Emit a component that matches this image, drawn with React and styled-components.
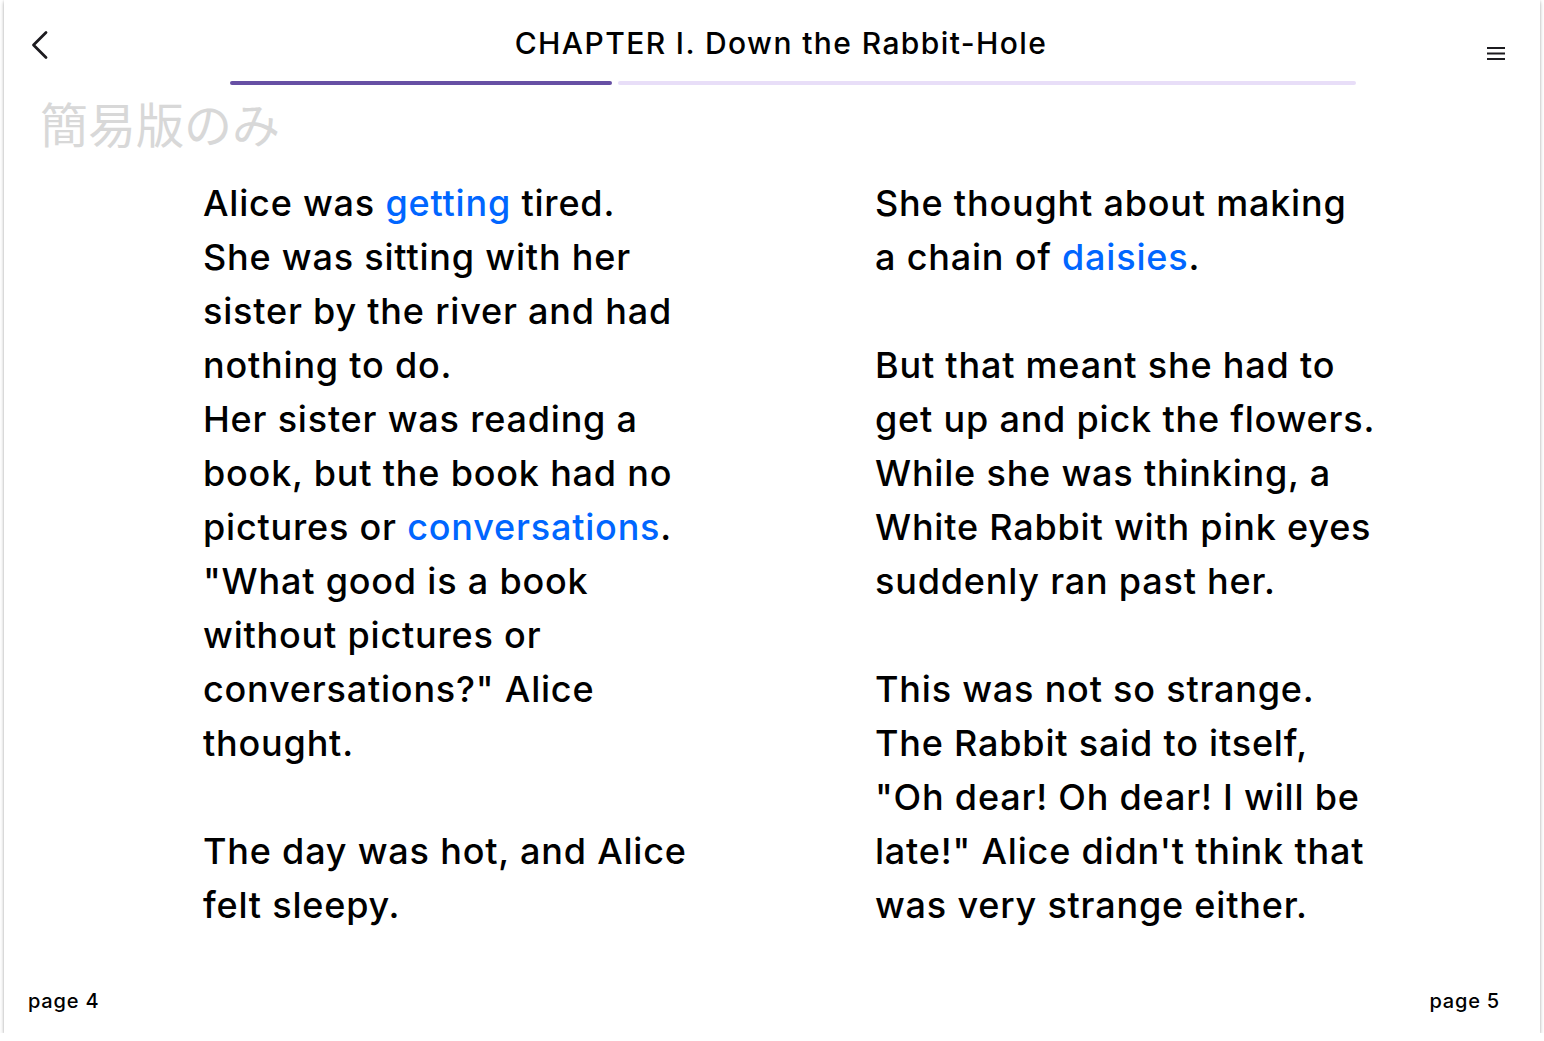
import styled, { createGlobalStyle } from "styled-components";

const GlobalStyle = createGlobalStyle`
  html, body {
    margin: 0;
    padding: 0;
    background: #ffffff;
  }
  body {
    font-family: "Inter", "Noto Sans", sans-serif;
    color: #000;
  }
`;

const Card = styled.div`
  margin: 0 4px 0 4px;
  width: 1536px;
  height: 1033px;
  background: #fff;
  box-shadow: 0 2px 4px rgba(0, 0, 0, 0.28), 0 0 2px rgba(0, 0, 0, 0.12);
  display: flex;
  flex-direction: column;
`;

const Header = styled.header`
  display: grid;
  grid-template-columns: 226px 1126px 1fr;
  height: 86px;
`;

const BackButton = styled.button`
  border: 0;
  background: none;
  padding: 30px 0 0 24px;
  align-self: start;
  justify-self: start;
  cursor: pointer;
  line-height: 0;
`;

const Center = styled.div`
  display: flex;
  flex-direction: column;
  align-items: stretch;
`;

const Title = styled.h1`
  margin: 0;
  padding: 25px 24px 0 0;
  height: 56px;
  box-sizing: border-box;
  text-align: center;
  font-size: 30px;
  font-weight: 500;
  line-height: 36px;
  letter-spacing: 1.4px;
`;

const Progress = styled.div`
  display: flex;
  gap: 6px;
  margin-top: 25px;
`;

const Segment = styled.div`
  height: 4px;
  border-radius: 2px;
  flex: ${(p) => p.$grow};
  background: ${(p) => (p.$done ? "#6750a4" : "#e8def8")};
`;

const MenuButton = styled.button`
  border: 0;
  background: none;
  padding: 47px 0 0 131px;
  align-self: start;
  justify-self: start;
  cursor: pointer;
  line-height: 0;
`;

const Watermark = styled.div`
  padding-left: 36px;
  height: 90px;
  font-family: "Noto Sans CJK JP", sans-serif;
  font-size: 48px;
  line-height: 72px;
  color: #d8d8d8;
`;

const Spread = styled.main`
  flex: 1;
  display: grid;
  grid-template-columns: 500px 500px;
  column-gap: 172px;
  padding-left: 199px;
`;

const Column = styled.div`
  font-size: 36px;
  line-height: 54px;
  font-weight: 500;
  letter-spacing: 0.8px;
`;

const Line = styled.div`
  white-space: nowrap;
  height: 54px;
`;

const Word = styled.span`
  color: #0066ff;
`;

const Footer = styled.footer`
  display: flex;
  justify-content: space-between;
  padding: 0 40px 20px 24px;
  font-size: 20px;
  line-height: 24px;
  font-weight: 500;
  letter-spacing: 0.8px;
`;

const leftLines = [
  ["Alice was ", { w: "getting" }, " tired."],
  ["She was sitting with her"],
  ["sister by the river and had"],
  ["nothing to do."],
  ["Her sister was reading a"],
  ["book, but the book had no"],
  ["pictures or ", { w: "conversations" }, "."],
  ["\"What good is a book"],
  ["without pictures or"],
  ["conversations?\" Alice"],
  ["thought."],
  [],
  ["The day was hot, and Alice"],
  ["felt sleepy."],
];

const rightLines = [
  ["She thought about making"],
  ["a chain of ", { w: "daisies" }, "."],
  [],
  ["But that meant she had to"],
  ["get up and pick the flowers."],
  ["While she was thinking, a"],
  ["White Rabbit with pink eyes"],
  ["suddenly ran past her."],
  [],
  ["This was not so strange."],
  ["The Rabbit said to itself,"],
  ["\"Oh dear! Oh dear! I will be"],
  ["late!\" Alice didn't think that"],
  ["was very strange either."],
];

function Page({ lines }) {
  return (
    <Column>
      {lines.map((parts, i) => (
        <Line key={i}>
          {parts.map((p, j) =>
            typeof p === "string" ? p : <Word key={j}>{p.w}</Word>
          )}
        </Line>
      ))}
    </Column>
  );
}

export default function App() {
  return (
    <>
      <GlobalStyle />
      <Card>
        <Header>
          <BackButton aria-label="back">
            <svg width="24" height="30" viewBox="0 0 24 30">
              <polyline
                points="18,2.5 5.5,15 18,27.5"
                fill="none"
                stroke="#1c1b1f"
                strokeWidth="2.8"
                strokeLinecap="round"
                strokeLinejoin="round"
              />
            </svg>
          </BackButton>
          <Center>
            <Title>CHAPTER I. Down the Rabbit-Hole</Title>
            <Progress>
              <Segment $done $grow={382} />
              <Segment $grow={738} />
            </Progress>
          </Center>
          <MenuButton aria-label="menu">
            <svg width="18" height="14" viewBox="0 0 18 14">
              <rect x="0" y="0" width="18" height="2" fill="#1c1b1f" />
              <rect x="0" y="5.5" width="18" height="2" fill="#1c1b1f" />
              <rect x="0" y="11" width="18" height="2" fill="#1c1b1f" />
            </svg>
          </MenuButton>
        </Header>
        <Watermark>簡易版のみ</Watermark>
        <Spread>
          <Page lines={leftLines} />
          <Page lines={rightLines} />
        </Spread>
        <Footer>
          <span>page 4</span>
          <span>page 5</span>
        </Footer>
      </Card>
    </>
  );
}
